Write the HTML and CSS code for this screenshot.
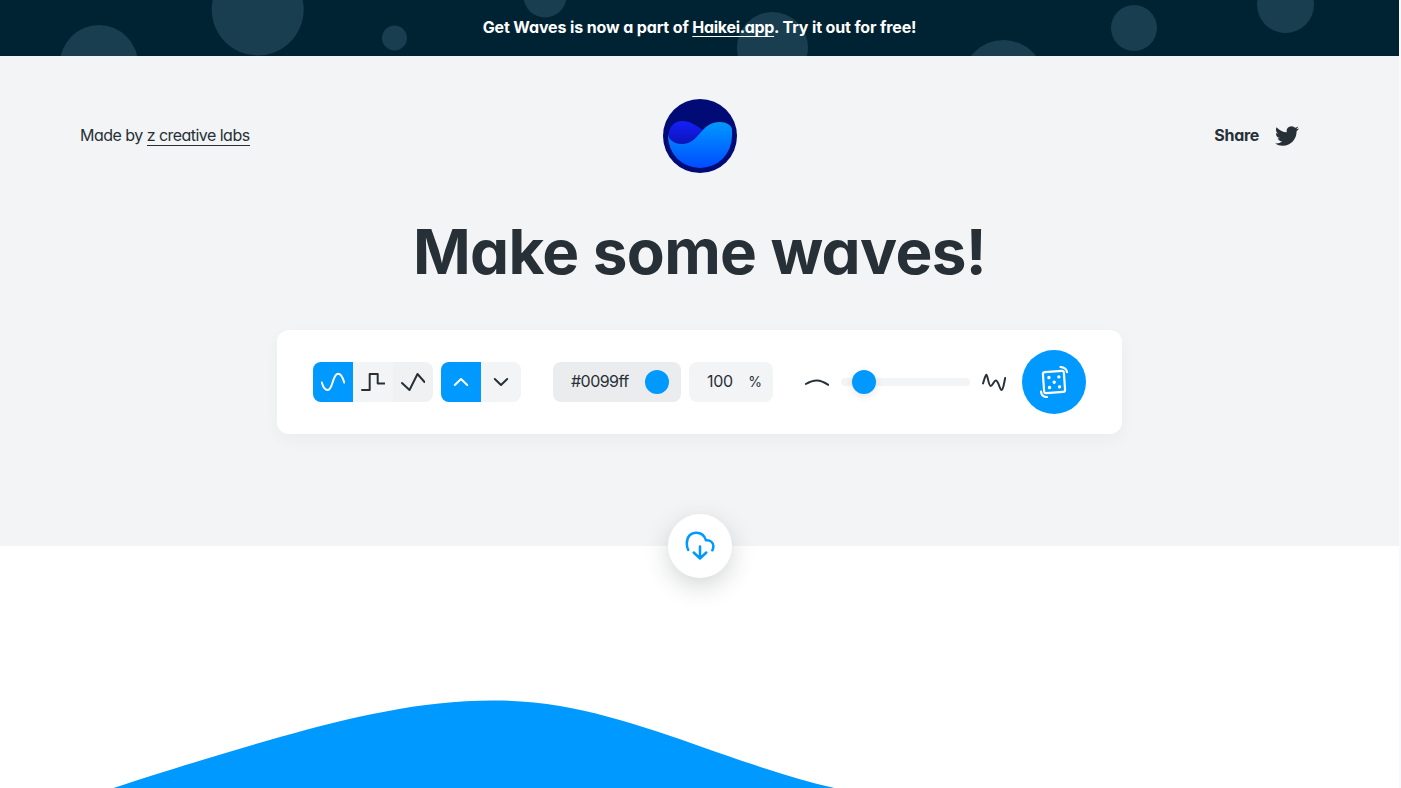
FILE: index.html
```html
<!DOCTYPE html>
<html lang="en">
<head>
<meta charset="utf-8">
<title>Get Waves</title>
<link rel="stylesheet" href="styles.css">
</head>
<body>
<div class="page">
  <div class="banner">
    <svg class="bubbles" width="1399" height="56" viewBox="0 0 1399 56">
      <circle cx="99" cy="64" r="39"/><circle cx="257.700" cy="9.500" r="46"/><circle cx="394.500" cy="38" r="12.500"/>
      <circle cx="545" cy="-4" r="21.500"/><circle cx="772.500" cy="47.500" r="35.500"/><circle cx="1003.500" cy="81" r="41"/>
      <circle cx="1134" cy="28" r="23"/><circle cx="1285.500" cy="4.500" r="28.500"/>
    </svg>
    <p class="banner-text">Get Waves is now a part of <a class="banner-link">Haikei.app</a>. Try it out for free!</p>
  </div>
  <main class="hero">
    <header class="header">
      <div class="made">Made by <a class="made-link">z creative labs</a></div>
      <svg class="logo" width="74" height="74" viewBox="0 0 74 74">
        <defs>
          <linearGradient id="front" x1="0" y1="0" x2="0" y2="1"><stop offset="0" stop-color="#0099ff"/><stop offset="1" stop-color="#004cff"/></linearGradient>
          <linearGradient id="back" x1="0" y1="0" x2="0" y2="1"><stop offset="0" stop-color="#1420fa"/><stop offset="1" stop-color="#0b13b4"/></linearGradient>
        </defs>
        <circle cx="37" cy="37" r="37" fill="#000b76"/>
        <path d="M5 37C6 27 12 22 19 22C27 22 34 27 40 31.500L31 45L12 46Z" fill="url(#back)"/>
        <path d="M5 36C7 42 12 45 19 45C37 45 37 23 57 23C63 23 69 26 69 31V37A32 32 0 0 1 5 37Z" fill="url(#front)"/>
      </svg>
      <div class="share"><span class="share-text">Share</span>
        <svg width="24" height="24" viewBox="0 0 24 24" fill="#273036"><path d="M23.953 4.570a10 10 0 0 1-2.825.775 4.958 4.958 0 0 0 2.163-2.723c-.951.555-2.005.959-3.127 1.184a4.920 4.920 0 0 0-8.384 4.482C7.690 8.095 4.067 6.130 1.640 3.162a4.822 4.822 0 0 0-.666 2.475c0 1.710.870 3.213 2.188 4.096a4.904 4.904 0 0 1-2.228-.616v.060a4.923 4.923 0 0 0 3.946 4.827 4.996 4.996 0 0 1-2.212.085 4.936 4.936 0 0 0 4.604 3.417 9.867 9.867 0 0 1-6.102 2.105c-.390 0-.779-.023-1.170-.067a13.995 13.995 0 0 0 7.557 2.209c9.053 0 13.998-7.496 13.998-13.985 0-.210 0-.420-.015-.630A9.935 9.935 0 0 0 24 4.590z"/></svg>
      </div>
    </header>
    <h1 class="title">Make some waves!</h1>
    <section class="panel">
      <div class="group">
        <button class="cell active"><svg class="icon" viewBox="0 0 24 24"><path d="M.8 12.500C2 17 4.500 20 6.700 20C12 20 11.500 3.700 17 3.700C20 3.700 22 8 23.200 12.500"/></svg></button>
        <button class="cell"><svg class="icon" viewBox="0 0 24 24"><path d="M1 20H8.700V4H16.700V13.500H23.500"/></svg></button>
        <button class="cell hover"><svg class="icon" viewBox="0 0 24 24"><path d="M1 13L8.500 20L16.500 4L23.500 12"/></svg></button>
      </div>
      <div class="group flip">
        <button class="cell active"><svg class="icon" viewBox="0 0 24 24"><path d="M5.800 15L12 9L18.200 15"/></svg></button>
        <button class="cell"><svg class="icon" viewBox="0 0 24 24"><path d="M5.800 9L12 15L18.200 9"/></svg></button>
      </div>
      <div class="field color"><span class="hex">#0099ff</span><i class="swatch"></i></div>
      <div class="field opacity"><span class="amount">100</span><span class="percent">%</span></div>
      <svg class="icon low" viewBox="0 0 24 24"><path d="M.8 14C9 9.300 14.500 9 23.300 14.800"/></svg>
      <div class="track"><i class="thumb"></i></div>
      <svg class="icon high" viewBox="0 0 24 24"><path d="M1 13.500C2.500 9 3.500 4.700 4.300 4.700C5.700 4.700 6.500 16 8.700 16C10.500 16 12 10.500 13.800 10.500C16.500 10.500 17.500 19.500 19.500 20C21.300 20 22 13 23.200 8"/></svg>
      <button class="dice"><svg class="dice-icon" viewBox="0 0 32 32">
        <g transform="rotate(-4 16 16)"><rect x="5.500" y="5.500" width="21" height="21" rx="2"/><g class="pips"><circle cx="11.300" cy="11.200" r="1.700"/><circle cx="21.200" cy="11.200" r="1.700"/><circle cx="16.200" cy="16.200" r="1.700"/><circle cx="11.200" cy="21.200" r="1.700"/><circle cx="21.200" cy="21.200" r="1.700"/></g></g>
        <path d="M22.500 1C26 1.300 28.500 3 29 6.200M3 25.500C3.300 29 5.500 31 9 31"/>
      </svg></button>
    </section>
  </main>
  <section class="preview">
    <button class="download"><svg class="cloud" viewBox="0 0 32 32"><path d="M4.200 20C3.200 18 2.800 16.500 2.800 13.500C2.800 6.500 7 2.700 12.300 2.700C17 2.700 20.500 5.500 22 10.300C26 9.700 29.400 12.500 29.400 16C29.400 17.700 29 19 28.300 20.300M16 16.500V28.500M9.700 22.500L16 28.500L22.300 22.500"/></svg></button>
    <svg class="wave" viewBox="0 546 1399 242"><path d="M0 832L47 812C93 793 187 764 280 737C373 711 466 690 560 706C653 722 746 769 839 789V850H0Z" fill="#0099ff"/></svg>
  </section>
</div>
</body>
</html>
```
FILE: styles.css
```css
* { box-sizing: border-box; }
body { margin: 0; background: #f8f9fa; overflow: hidden; font-family: Inter, "Open Sans", sans-serif; font-size: 16px; line-height: 24px; color: #273036; font-feature-settings: "cv11" 1; }
button { border: 0; padding: 0; background: none; display: flex; align-items: center; justify-content: center; }
svg { display: block; flex: none; }
.page { width: 1399px; height: 788px; overflow: hidden; }
.banner { position: relative; height: 56px; background: #002333; display: flex; justify-content: center; align-items: center; }
.bubbles { position: absolute; inset: 0; fill: #193e50; }
.banner-text { position: relative; margin: 0; padding-bottom: 2px; color: #fff; font-weight: 700; letter-spacing: -0.13px; white-space: nowrap; }
.banner-link { text-decoration: underline; text-decoration-thickness: 1px; text-underline-offset: 3px; letter-spacing: -0.3px; }
.hero { height: 490px; background: #f3f4f6; padding: 43px 100px 0 80px; }
.header { display: grid; grid-template-columns: 1fr 74px 1fr; align-items: center; margin-right: -20px; }
.made { white-space: nowrap; letter-spacing: -0.53px; padding-bottom: 2px; }
.made-link { display: inline-block; line-height: 20px; border-bottom: 1px solid #273036; }
.share { display: flex; justify-content: flex-end; align-items: center; gap: 16px; padding-right: 20px; font-weight: 700; }
.share-text { letter-spacing: -0.3px; padding-bottom: 2px; }
.title { margin: 39px -20px 0 0; height: 80px; line-height: 80px; text-align: center; font-size: 62px; font-weight: 700; letter-spacing: -0.65px; white-space: nowrap; }
.panel { width: 845px; height: 104px; margin: 38px 0 0 197px; padding: 0 36px; display: flex; align-items: center; background: #fff; border-radius: 12px; box-shadow: 0 6px 16px rgba(39, 48, 54, .04); }
.group { display: flex; border-radius: 8px; overflow: hidden; }
.flip { margin: 0 32px 0 8px; }
.cell { width: 40px; height: 40px; background: #f3f4f6; color: #273036; }
.cell.active { background: #0099ff; color: #fff; }
.cell.hover { background: #f0f1f3; }
.icon { width: 24px; height: 24px; fill: none; stroke: currentColor; stroke-width: 2; stroke-linecap: round; stroke-linejoin: round; }
.field { height: 40px; border-radius: 8px; background: #f3f4f6; display: flex; align-items: center; justify-content: space-between; }
.color { width: 128px; margin-right: 8px; padding: 0 12px 0 18px; background: #ebecee; }
.hex { letter-spacing: -0.55px; padding-bottom: 2px; }
.swatch { width: 24px; height: 24px; border-radius: 50%; background: #0099ff; }
.opacity { width: 84px; padding: 0 11px 0 18px; }
.amount { letter-spacing: -0.35px; padding-bottom: 2px; }
.percent { font-size: 14px; padding-bottom: 1px; }
.low { margin: 0 12px 0 32px; }
.track { width: 129px; height: 8px; border-radius: 4px; background: #f3f4f6; padding-left: 11px; display: flex; align-items: center; }
.thumb { width: 24px; height: 24px; flex: none; border-radius: 50%; background: #0099ff; box-shadow: 0 2px 8px rgba(39, 48, 54, .12); }
.high { margin: 0 16px 0 12px; }
.dice { width: 64px; height: 64px; border-radius: 50%; background: #0099ff; }
.dice-icon { width: 32px; height: 32px; fill: none; stroke: #fff; stroke-width: 2.2; stroke-linecap: round; }
.pips { fill: #fff; stroke: none; }
.preview { position: relative; height: 242px; background: #fff; }
.wave { width: 1399px; height: 242px; }
.download { position: absolute; left: 668px; top: -32px; width: 64px; height: 64px; border-radius: 50%; background: #fff; box-shadow: 0 8px 24px rgba(39, 48, 54, .2); }
.cloud { width: 32px; height: 32px; fill: none; stroke: #0099ff; stroke-width: 2.5; stroke-linecap: round; stroke-linejoin: round; }
```
